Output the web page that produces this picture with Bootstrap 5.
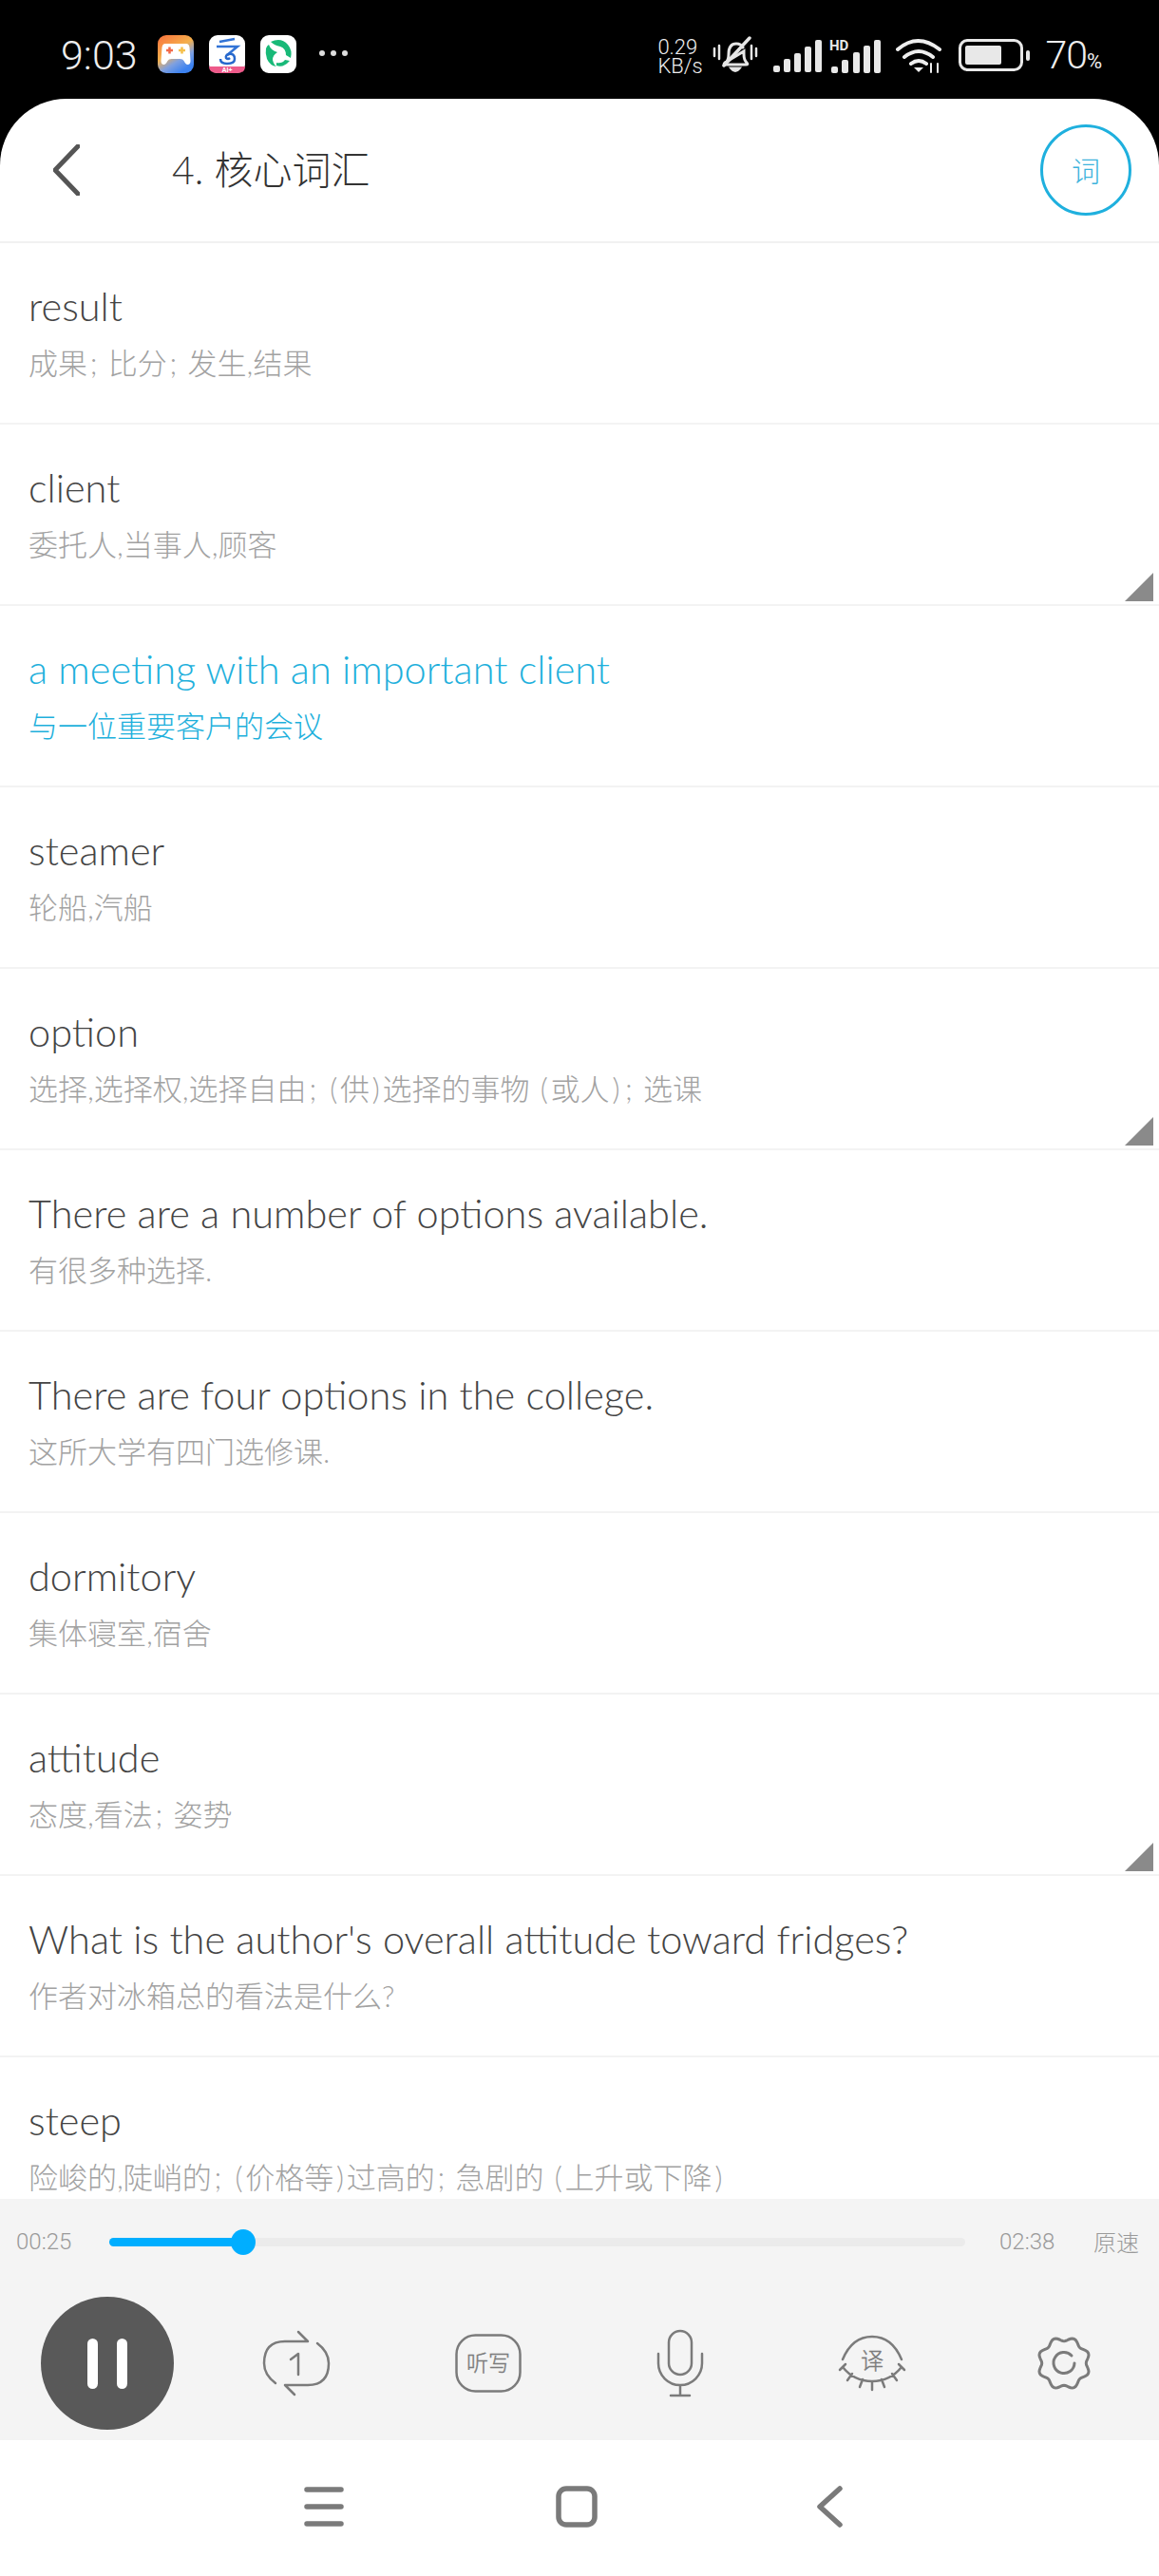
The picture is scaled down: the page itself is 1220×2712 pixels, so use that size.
<!doctype html>
<html lang="zh">
<head>
    <meta charset="utf-8">
    <meta name="viewport" content="width=device-width, initial-scale=1">
    <title>核心词汇</title>
    <link href="https://cdn.jsdelivr.net/npm/bootstrap@5.3.3/dist/css/bootstrap.min.css" rel="stylesheet">
    <style>
        html, body { height: 100%; }
        body { background: #000; font-family: Lato, "Noto Sans CJK SC", sans-serif; font-weight: 300; overflow: hidden; }
        .page-wrap { height: 2712px; }

        .status-bar { height: 104px; flex: none; color: #eee; padding: 37px 60px 0 64px; }
        .status-time { font-size: 43px; line-height: 42px; width: 102px; font-family: Roboto, sans-serif; font-weight: 300; }
        .app-icon { width: 38px; height: 40px; margin-right: 16px; }
        .status-dots { margin: 14px 0 0 7px; width: 32px; height: 10px; }
        .net-speed { font-size: 22px; line-height: 20px; font-family: Roboto, sans-serif; font-weight: 300; width: 58px; margin-top: 3px; }
        .st-sig { margin: 4px 0 0 16px; }
        .st-hd { margin: 3px 0 0 8px; }
        .st-wifi { margin: 2px 0 0 16px; }
        .st-batt { margin: 4px 0 0 16px; }
        .batt-num { font-family: Roboto, sans-serif; font-weight: 300; font-size: 41px; line-height: 40px; margin-left: 15px; letter-spacing: -1px; padding-top: 1px; }
        .batt-num span { font-size: 22px; font-weight: 400; letter-spacing: 0; }

        .sheet { background: #fff; border-radius: 70px 70px 0 0; min-height: 0; }
        .top-head { height: 152px; flex: none; border-bottom: 2px solid #f1f1f1; padding: 0 29px 0 56px; }
        .head-title { font-size: 41px; color: #333; margin-left: 97px; }
        .word-btn { width: 96px; height: 96px; border: 3px solid #1fb0de; border-radius: 50%; color: #3cb3dc; font-size: 30px; }

        .word-list { min-height: 0; overflow: hidden; }
        .word-row.list-group-item { height: 191px; flex: none; padding: 40px 30px 0; border-color: #f3f3f3; border-width: 0 0 2px; }
        .word-en { font-size: 41.500px; line-height: 52px; color: #444; white-space: nowrap; }
        .word-zh { font-size: 31px; line-height: 40px; margin-top: 14px; color: #a2a2a2; white-space: nowrap; }
        .zh-punct { margin: 0 2.800px; }
        .word-row.is-active .word-en, .word-row.is-active .word-zh { color: #1eb0dc; }
        .has-more { position: absolute; right: 6px; bottom: 3px; width: 30px; height: 30px; background: #8a8a8a; clip-path: polygon(100% 0, 100% 100%, 0 100%); }

        .player { height: 254px; flex: none; background: #f4f4f4; }
        .seek-row { height: 90px; color: #9a9a9a; font-size: 24px; font-family: Roboto, sans-serif; padding: 0 21px 0 17px; white-space: nowrap; }
        .time-cur { width: 98px; flex: none; }
        .seek-wrap { width: 901px; flex: none; position: relative; }
        .seek-wrap .progress { height: 9px; --bs-progress-bg: #ebebeb; --bs-progress-bar-bg: #00aeff; border-radius: 5px; }
        .seek-thumb { position: absolute; top: -9px; width: 26px; height: 27px; margin-left: -13px; background: #00aeff; border-radius: 50%; }
        .time-end { margin-left: 36px; width: 99px; flex: none; }
        .speed-lbl { font-family: "Noto Sans CJK SC", sans-serif; font-weight: 300; }

        .ctrl-row { display: grid; grid-template-columns: 196px repeat(5, 202px); padding-left: 15px; height: 164px; }
        .pause-btn { width: 140px; height: 140px; background: #595959; border-radius: 50%; margin-top: 13px; gap: 20px; }
        .pause-btn i { display: block; width: 11px; height: 53px; background: #fff; border-radius: 6px; }
        .ctrl-icon { height: 150px; margin-top: 8px; }
        .ctrl-icon text { font-family: "Noto Sans CJK SC", sans-serif; fill: #7b7b7b; stroke: #7b7b7b; stroke-width: .4px; }

        .bottom-nav { height: 143px; flex: none; background: #fff; padding: 0 6px 4px 0; }
        .nav-cell { width: 266px; }
    </style>
</head>
<body>
<div class="page-wrap d-flex flex-column">

    <!-- status bar -->
    <div class="status-bar d-flex align-items-start">
        <div class="status-time">9:03</div>
        <svg class="app-icon" viewBox="0 0 38 40">
            <defs>
                <linearGradient id="gameGrad" x1="0" y1="0" x2="0.6" y2="1">
                    <stop offset="0" stop-color="#f9703c"/><stop offset=".5" stop-color="#f5b04c"/><stop offset=".75" stop-color="#7fa0e0"/><stop offset="1" stop-color="#3c82f0"/>
                </linearGradient>
            </defs>
            <rect width="38" height="40" rx="9" fill="url(#gameGrad)"/>
            <path d="M8 9h22q3 0 3.500 4l1 14q0 4-3 4-2 0-4-4-1-2-4-2h-9q-3 0-4 2-2 4-4 4-3 0-3-4l1-14q.5-4 3.500-4z" fill="#fff"/>
            <path d="M9 16h7M12.500 12.500v7" stroke="#f26a4a" stroke-width="2.500"/>
            <path d="M22 16h7M25.500 12.500v7" stroke="#f5c04c" stroke-width="2.500"/>
        </svg>
        <svg class="app-icon" viewBox="0 0 38 40">
            <rect width="38" height="40" rx="9" fill="#fff"/>
            <path d="M11 7 27 4M8 12h22L19 21" stroke="#3173d6" stroke-width="2.500" fill="none"/>
            <path d="M12 25q0 5 7 5 8 0 8-5 0-6-6-5-4 1-3 4 2 2 4 0" stroke="#2768cc" stroke-width="2.500" fill="none"/>
            <path d="M0 33h38q0 7-9 7H9q-9 0-9-7z" fill="#ee5a8a"/>
            <text x="19" y="39" font-size="7" fill="#fff" text-anchor="middle" font-weight="700" font-family="Liberation Sans, sans-serif">AI+</text>
        </svg>
        <svg class="app-icon" viewBox="0 0 38 40">
            <rect width="38" height="40" rx="9" fill="#fff"/>
            <path d="M11 7q11-5 18 3 5 6 3 14l-5-3q0-7-6-9-6-1-10-5zM6 14q1-3 3-4 2 6 9 8-5 3-5 8 1 5 4 7-7-1-10-8-2-6-1-11zM17 32q7 3 14-5l-5-1q-3 4-9 3z" fill="#18b978"/>
        </svg>
        <svg class="status-dots" viewBox="0 0 32 10">
            <circle cx="4" cy="5" r="3" fill="#ddd"/><circle cx="16" cy="5" r="3" fill="#ddd"/><circle cx="28" cy="5" r="3" fill="#ddd"/>
        </svg>

        <div class="ms-auto d-flex align-items-start">
            <div class="net-speed">0.29<br>KB/s</div>
            <svg width="48" height="42" viewBox="0 0 48 42" fill="none" stroke="#e6e6e6" stroke-linecap="round">
                <path d="M2 14v8M7 11v14M41 11v14M46 14v8" stroke-width="2.500"/>
                <path d="M14 29q3-3 3-9 0-11 8-11 5 0 7 4M33 17v3q0 6 3 9 2 2-1 2H14q-3 0-1-2zM20 35q4 5 8 0z" stroke-width="3"/>
                <path d="M12 32 39 3" stroke-width="3.500"/>
            </svg>
            <svg class="st-sig" width="51" height="36" viewBox="0 0 51 36" fill="#e8e8e8">
                <rect x="0" y="28" width="7" height="7" rx="2"/><rect x="11" y="21" width="7" height="14" rx="2"/><rect x="22" y="15" width="7" height="20" rx="2"/><rect x="33" y="8" width="7" height="27" rx="2"/><rect x="44" y="1" width="7" height="34" rx="2"/>
            </svg>
            <svg class="st-hd" width="54" height="38" viewBox="0 0 54 38" fill="#e8e8e8">
                <text x="0" y="13" font-size="15" font-weight="700" font-family="Roboto, sans-serif">HD</text>
                <rect x="2" y="30" width="7" height="7" rx="2"/><rect x="13" y="23" width="7" height="14" rx="2"/><rect x="25" y="15" width="7" height="22" rx="2"/><rect x="36" y="8" width="7" height="29" rx="2"/><rect x="47" y="2" width="7" height="35" rx="2"/>
            </svg>
            <svg class="st-wifi" width="50" height="38" viewBox="0 0 50 38" fill="none" stroke="#eee" stroke-width="4" stroke-linecap="round">
                <path d="M2 13q21-18 44 0M9 21q15-12 30 0M16 28q8-6 16 0"/>
                <path d="M19 32h10l-5 5z" fill="#eee" stroke="none"/>
                <path d="M37 37v-9M44 37v-9" stroke-width="2"/>
            </svg>
            <svg class="st-batt" width="76" height="34" viewBox="0 0 76 34">
                <rect x="1.500" y="1.500" width="65" height="31" rx="8" fill="none" stroke="#e8e8e8" stroke-width="3"/>
                <rect x="7" y="7" width="38" height="20" rx="2" fill="#e8e8e8"/>
                <rect x="71" y="12" width="4" height="11" rx="2" fill="#e8e8e8"/>
            </svg>
            <div class="batt-num">70<span>%</span></div>
        </div>
    </div>

    <div class="sheet flex-grow-1 d-flex flex-column">
        <div class="top-head d-flex align-items-center">
            <svg width="28" height="54" viewBox="0 0 28 54" fill="none" stroke="#555" stroke-width="5" stroke-linecap="round" stroke-linejoin="round"><path d="M26 2 2 27l24 25"/></svg>
            <div class="head-title">4. 核心词汇</div>
            <div class="word-btn ms-auto d-flex align-items-center justify-content-center">词</div>
        </div>

        <div class="word-list list-group list-group-flush flex-grow-1 rounded-0" id="wordList"></div>

        <div class="player">
            <div class="seek-row d-flex align-items-center">
                <div class="time-cur">00:25</div>
                <div class="seek-wrap">
                    <div class="progress"><div class="progress-bar" style="width: 15.6%"></div></div>
                    <div class="seek-thumb" style="left: 15.6%"></div>
                </div>
                <div class="time-end">02:38</div>
                <div class="speed-lbl">原速</div>
            </div>
            <div class="ctrl-row">
                <div class="d-flex justify-content-center align-items-start">
                    <div class="pause-btn d-flex align-items-center justify-content-center"><i></i><i></i></div>
                </div>
                <div class="ctrl-icon d-flex justify-content-center align-items-center">
                    <svg width="72" height="72" viewBox="0 0 72 72" fill="none" stroke="#7b7b7b" stroke-width="2.500" stroke-linecap="round" stroke-linejoin="round">
                        <path d="M14 57Q2 48 2 36 2 13 24 13h24L38 3"/>
                        <path d="M58 15q12 9 12 21 0 23-22 23H24l10 10"/>
                        <path d="M30 32l8-6v22"/>
                    </svg>
                </div>
                <div class="ctrl-icon d-flex justify-content-center align-items-center">
                    <svg width="70" height="62" viewBox="0 0 70 62">
                        <rect x="1.500" y="1.500" width="67" height="59" rx="20" fill="none" stroke="#7b7b7b" stroke-width="2.500"/>
                        <text x="35" y="39" font-size="23" text-anchor="middle">听写</text>
                    </svg>
                </div>
                <div class="ctrl-icon d-flex justify-content-center align-items-center">
                    <svg width="50" height="72" viewBox="0 0 50 72" fill="none" stroke="#7b7b7b" stroke-width="2.500" stroke-linecap="round">
                        <rect x="13" y="2" width="24" height="46" rx="12"/>
                        <path d="M2 26v10a23 23 0 0 0 46 0V26M25 59v11M15 70h20"/>
                    </svg>
                </div>
                <div class="ctrl-icon d-flex justify-content-center align-items-center">
                    <svg width="72" height="60" viewBox="0 0 72 60" fill="none" stroke="#7b7b7b" stroke-width="2.500" stroke-linecap="round">
                        <path d="M5 26Q15 2 36 2t31 24"/>
                        <path d="M5 34q12 15 31 15t31-15M8 31l-6 6M15 41l-5 7M26 47l-3 8M36 49v9M46 47l3 8M57 41l5 7M64 31l6 6"/>
                        <text x="36" y="36" font-size="24" text-anchor="middle">译</text>
                    </svg>
                </div>
                <div class="ctrl-icon d-flex justify-content-center align-items-center">
                    <svg width="58" height="58" viewBox="0 0 58 58" fill="none" stroke="#7b7b7b" stroke-width="3" stroke-linecap="round">
                        <path id="gearEdge"/>
                        <path d="M37 21a11 11 0 1 0 3 8"/>
                    </svg>
                </div>
            </div>
        </div>

        <div class="bottom-nav d-flex justify-content-center align-items-center">
            <div class="nav-cell d-flex justify-content-center">
                <svg width="42" height="42" viewBox="0 0 42 42" stroke="#7a7a7a" stroke-width="5.500" stroke-linecap="round"><path d="M3 3h36M3 21h36M3 39h36"/></svg>
            </div>
            <div class="nav-cell d-flex justify-content-center">
                <svg width="44" height="44" viewBox="0 0 44 44"><rect x="3" y="3" width="38" height="38" rx="8" fill="none" stroke="#7a7a7a" stroke-width="5.500"/></svg>
            </div>
            <div class="nav-cell d-flex justify-content-center">
                <svg width="28" height="44" viewBox="0 0 28 44" fill="none" stroke="#7a7a7a" stroke-width="5.500" stroke-linecap="round" stroke-linejoin="round"><path d="M25 3 4 22l21 19"/></svg>
            </div>
        </div>
    </div>
</div>

<script>
    const words = [
        { en: "result", zh: "成果; 比分; 发生,结果" },
        { en: "client", zh: "委托人,当事人,顾客", more: true },
        { en: "a meeting with an important client", zh: "与一位重要客户的会议", active: true },
        { en: "steamer", zh: "轮船,汽船" },
        { en: "option", zh: "选择,选择权,选择自由; (供)选择的事物 (或人); 选课", more: true },
        { en: "There are a number of options available.", zh: "有很多种选择." },
        { en: "There are four options in the college.", zh: "这所大学有四门选修课." },
        { en: "dormitory", zh: "集体寝室,宿舍" },
        { en: "attitude", zh: "态度,看法; 姿势", more: true },
        { en: "What is the author's overall attitude toward fridges?", zh: "作者对冰箱总的看法是什么?" },
        { en: "steep", zh: "险峻的,陡峭的; (价格等)过高的; 急剧的 (上升或下降)" }
    ];

    const list = document.getElementById("wordList");
    words.forEach(w => {
        const row = document.createElement("div");
        row.className = "word-row list-group-item" + (w.active ? " is-active" : "");
        // semicolons and brackets sit wider in the original font
        const zh = w.zh.replace(/[;()]/g, '<span class="zh-punct">$&</span>');
        row.innerHTML = `
            <div class="word-en">${w.en}</div>
            <div class="word-zh">${zh}</div>
            ${w.more ? '<span class="has-more"></span>' : ''}
        `;
        list.appendChild(row);
    });

    // wavy gear edge, 8 lobes with a dip at the top
    let gear = "";
    for (let i = 0; i <= 96; i++) {
        const a = i / 96 * Math.PI * 2;
        const r = 25.5 - 2.2 * Math.cos(8 * a);
        gear += (i ? "L" : "M") + (29 + r * Math.sin(a)).toFixed(1) + " " + (29 - r * Math.cos(a)).toFixed(1);
    }
    document.getElementById("gearEdge").setAttribute("d", gear + "Z");
</script>
<script src="https://cdn.jsdelivr.net/npm/bootstrap@5.3.3/dist/js/bootstrap.bundle.min.js"></script>
</body>
</html>
